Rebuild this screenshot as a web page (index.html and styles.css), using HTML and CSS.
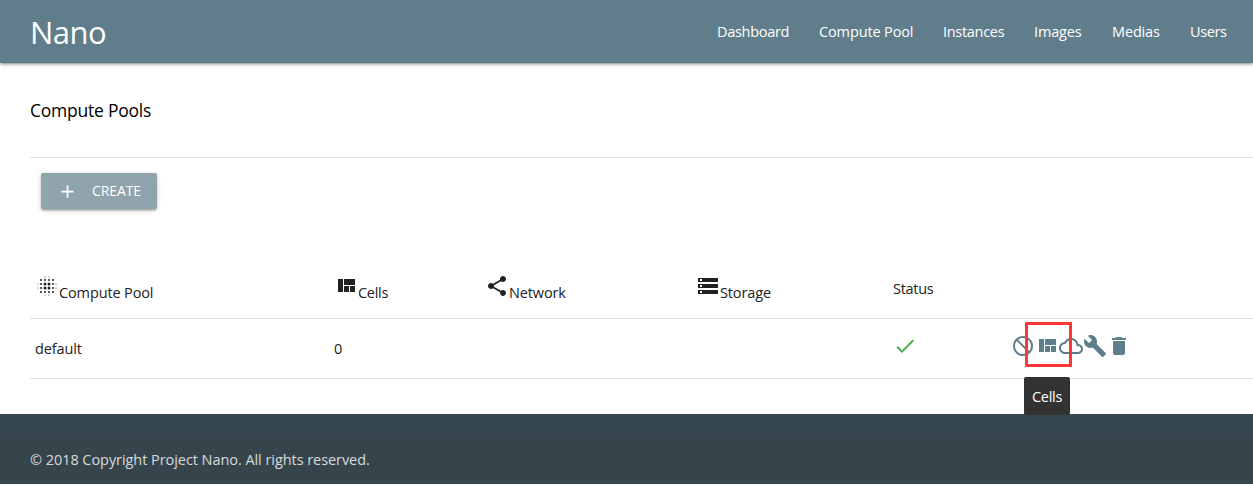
FILE: index.html
```html
<!DOCTYPE html>
<html lang="en">
<head>
<meta charset="utf-8">
<title>Nano</title>
<link rel="stylesheet" href="styles.css">
</head>
<body>
<header class="navbar">
  <a class="brand"><span>Nano</span></a>
  <nav class="menu">
    <a class="w-dashboard">Dashboard</a>
    <a class="w-pool">Compute Pool</a>
    <a class="w-instances">Instances</a>
    <a class="w-images">Images</a>
    <a class="w-medias">Medias</a>
    <a class="w-users">Users</a>
  </nav>
</header>
<main class="content">
  <h1 class="title">Compute Pools</h1>
  <div class="toolbar">
    <button class="create">
      <svg class="plus" viewBox="0 0 24 24"><path d="M19 13h-6v6h-2v-6H5v-2h6V5h2v6h6v2z"/></svg>
      <span>CREATE</span>
    </button>
  </div>
  <div class="table">
    <div class="row head">
      <div class="cell"><svg class="icon" viewBox="0 0 24 24"><g><circle cx="10" cy="10" r="1.5"/><circle cx="14" cy="10" r="1.5"/><circle cx="10" cy="14" r="1.5"/><circle cx="14" cy="14" r="1.5"/><circle cx="6" cy="6" r="1"/><circle cx="10" cy="6" r="1"/><circle cx="14" cy="6" r="1"/><circle cx="18" cy="6" r="1"/><circle cx="6" cy="10" r="1"/><circle cx="18" cy="10" r="1"/><circle cx="6" cy="14" r="1"/><circle cx="18" cy="14" r="1"/><circle cx="6" cy="18" r="1"/><circle cx="10" cy="18" r="1"/><circle cx="14" cy="18" r="1"/><circle cx="18" cy="18" r="1"/><circle cx="10" cy="3" r=".5"/><circle cx="14" cy="3" r=".5"/><circle cx="10" cy="21" r=".5"/><circle cx="14" cy="21" r=".5"/><circle cx="3" cy="10" r=".5"/><circle cx="3" cy="14" r=".5"/><circle cx="21" cy="10" r=".5"/><circle cx="21" cy="14" r=".5"/></g></svg><span class="label wide">Compute Pool</span></div>
      <div class="cell"><svg class="icon" viewBox="0 0 24 24"><path d="M10 18h5v-6h-5v6zm-6 0h5V5H4v13zm12 0h5v-6h-5v6zM10 5v6h11V5H10z"/></svg><span class="label">Cells</span></div>
      <div class="cell"><svg class="icon" viewBox="0 0 24 24"><path d="M18 16.08c-.76 0-1.44.3-1.96.77L8.91 12.7c.05-.23.09-.46.09-.7s-.04-.47-.09-.7l7.05-4.11c.54.5 1.25.81 2.04.81 1.66 0 3-1.34 3-3s-1.34-3-3-3-3 1.34-3 3c0 .24.04.47.09.7L8.04 9.81C7.5 9.31 6.79 9 6 9c-1.66 0-3 1.34-3 3s1.34 3 3 3c.79 0 1.5-.31 2.04-.81l7.12 4.16c-.05.21-.08.43-.08.65 0 1.61 1.31 2.92 2.92 2.92s2.92-1.31 2.92-2.92-1.31-2.92-2.92-2.92z"/></svg><span class="label wide">Network</span></div>
      <div class="cell"><svg class="icon" viewBox="0 0 24 24"><path d="M2 20h20v-4H2v4zm2-3h2v2H4v-2zM2 4v4h20V4H2zm4 3H4V5h2v2zm-4 7h20v-4H2v4zm2-3h2v2H4v-2z"/></svg><span class="label wide">Storage</span></div>
      <div class="cell"><span class="status">Status</span></div>
      <div class="cell"></div>
    </div>
    <div class="row">
      <div class="cell"><span class="wide">default</span></div>
      <div class="cell"><span>0</span></div>
      <div class="cell"></div>
      <div class="cell"></div>
      <div class="cell"><svg class="icon ok" viewBox="0 0 24 24"><path d="M9 16.17L4.83 12l-1.42 1.41L9 19 21 7l-1.41-1.41z"/></svg></div>
      <div class="cell actions">
        <svg class="icon" viewBox="0 0 24 24"><path d="M12 2C6.48 2 2 6.48 2 12s4.480 10 10 10 10-4.480 10-10S17.520 2 12 2zM4 12c0-4.420 3.580-8 8-8 1.850 0 3.550.63 4.900 1.690L5.690 16.900C4.630 15.550 4 13.850 4 12zm8 8c-1.850 0-3.550-.63-4.900-1.690L18.310 7.100C19.370 8.450 20 10.150 20 12c0 4.420-3.580 8-8 8z" transform="matrix(-1 0 0 1 24 0)"/></svg>
        <div class="hovered">
          <svg class="icon" viewBox="0 0 24 24"><path d="M10 18h5v-6h-5v6zm-6 0h5V5H4v13zm12 0h5v-6h-5v6zM10 5v6h11V5H10z"/></svg>
          <div class="marker"></div>
          <div class="tooltip"><span>Cells</span></div>
        </div>
        <svg class="icon" viewBox="0 0 24 24"><path d="M19.350 10.040C18.670 6.590 15.640 4 12 4 9.110 4 6.600 5.640 5.350 8.040 2.340 8.360 0 10.910 0 14c0 3.310 2.690 6 6 6h13c2.760 0 5-2.240 5-5 0-2.640-2.050-4.780-4.650-4.960zM19 18H6c-2.210 0-4-1.790-4-4s1.790-4 4-4h.71C7.370 7.690 9.480 6 12 6c3.040 0 5.500 2.460 5.500 5.500v.5H19c1.660 0 3 1.340 3 3s-1.340 3-3 3z"/></svg>
        <svg class="icon" viewBox="0 0 24 24"><path d="M22.700 19l-9.100-9.100c.9-2.300.4-5-1.500-6.900-2-2-5-2.400-7.400-1.300L9 6 6 9 1.600 4.700C.4 7.100.9 10.100 2.900 12.100c1.900 1.900 4.600 2.400 6.900 1.500l9.100 9.100c.4.4 1 .4 1.400 0l2.300-2.300c.5-.4.5-1.100.1-1.400z"/></svg>
        <svg class="icon" viewBox="0 0 24 24"><path d="M6 19c0 1.100.9 2 2 2h8c1.100 0 2-.9 2-2V7H6v12zM19 4h-3.500l-1-1h-5l-1 1H5v2h14V4z"/></svg>
      </div>
    </div>
  </div>
</main>
<footer class="footer">
  <div class="copyright"><span>© 2018 Copyright Project Nano. All rights reserved.</span></div>
</footer>
</body>
</html>
```
FILE: styles.css
```css
* { box-sizing: border-box; }
body {
  margin: 0;
  height: 486px;
  overflow: hidden;
  background: #fff;
  font: 14.5px/22px "Open Sans", "Noto Sans", sans-serif;
  letter-spacing: -0.3px;
  color: #212121;
  display: flex;
  flex-direction: column;
}
span, a { white-space: nowrap; }
svg { fill: currentColor; display: block; flex: none; }
.navbar {
  position: relative;
  height: 63px;
  flex: none;
  padding: 0 26px 0 30px;
  display: flex;
  justify-content: space-between;
  align-items: center;
  background: #607d8b;
  color: #fff;
  box-shadow: 0 2px 2px 0 rgba(0,0,0,.14), 0 3px 1px -2px rgba(0,0,0,.12), 0 1px 5px 0 rgba(0,0,0,.2);
}
.brand { font-size: 31px; line-height: 60px; letter-spacing: -0.5px; padding-top: 1px; }
.menu { display: flex; gap: 30px; }
.w-dashboard { width: 72px; }
.w-pool { width: 94px; letter-spacing: -0.13px; }
.w-instances { width: 61px; }
.w-images { width: 48px; letter-spacing: -0.15px; }
.w-medias { width: 48px; letter-spacing: -0.15px; }
.w-users { width: 37px; letter-spacing: -0.4px; }
.content { height: 351px; flex: none; padding-left: 30px; }
.title {
  margin: 0;
  height: 95px;
  padding-top: 35px;
  border-bottom: 1px solid #e0e0e0;
  font-size: 17.5px;
  letter-spacing: -0.24px;
  font-weight: 400;
  line-height: 24px;
  color: #000;
}
.toolbar { height: 100px; padding: 15px 11px; }
.create {
  display: flex;
  align-items: center;
  width: 116px;
  height: 36px;
  border: 0;
  border-radius: 2px;
  padding: 0 0 0 16px;
  gap: 14px;
  background: #90a4ae;
  color: #fff;
  font: 14px/36px "Open Sans", sans-serif;
  letter-spacing: -0.1px;
  box-shadow: 0 2px 2px 0 rgba(0,0,0,.14), 0 3px 1px -2px rgba(0,0,0,.12), 0 1px 5px 0 rgba(0,0,0,.2);
}
.plus { width: 21px; height: 21px; }
.row {
  display: grid;
  grid-template-columns: 299px 151px 211px 197px 118px 1fr;
  height: 60px;
  border-bottom: 1px solid #e0e0e0;
}
.row.head { height: 61px; }
.cell { display: flex; align-items: center; padding-left: 5px; }
.icon { width: 24px; height: 24px; margin-bottom: 5px; }
.head .icon { margin-bottom: 4px; }
.label { padding-top: 10px; }
.wide { letter-spacing: -0.13px; }
.status { padding-top: 2px; }
.ok { color: #4caf50; }
.actions .icon { color: #607d8b; }
.hovered { position: relative; }
.marker {
  position: absolute;
  left: -10px;
  top: -12px;
  width: 47px;
  height: 45px;
  border: 3px solid #fd3737;
}
.tooltip {
  position: absolute;
  z-index: 2;
  left: -11px;
  top: 43px;
  width: 46px;
  height: 38px;
  border-radius: 2px;
  background: #323232;
  color: #fff;
  text-align: center;
  line-height: 40px;
}
.footer { height: 70px; flex: none; padding-top: 20px; background: #37474f; color: #d7dadc; }
.copyright { height: 50px; padding-left: 30px; line-height: 52px; letter-spacing: -0.06px; background: rgba(51,51,51,.08); }
```
